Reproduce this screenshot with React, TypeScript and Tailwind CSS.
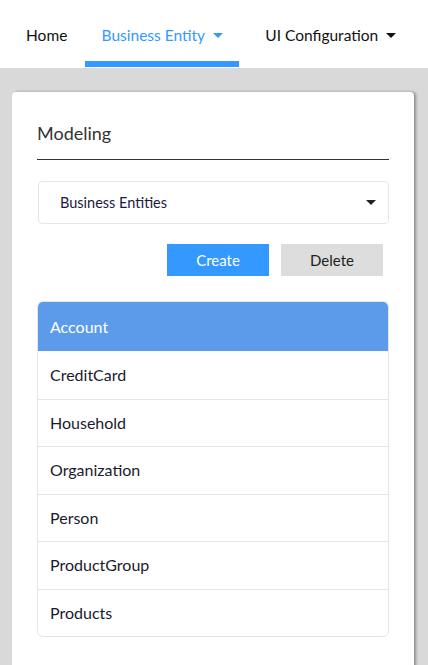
import React from "react";

const items = ["CreditCard", "Household", "Organization", "Person", "ProductGroup", "Products"];

function Caret({ className }: { className: string }) {
  return (
    <svg width="10" height="6" viewBox="0 0 10 6" className={className}>
      <path d="M0 0 L10 0 L5 5 Z" fill="currentColor" />
    </svg>
  );
}

export default function App() {
  return (
    <div className="w-[428px] h-[665px] overflow-hidden bg-[#d9d9d9] flex flex-col" style={{ fontFamily: "Lato, 'Noto Sans', sans-serif" }}>
      <nav className="h-[68px] bg-white flex items-stretch shrink-0 text-[15.5px] text-[#111]">
        <div className="pl-[26px] pr-[18px] flex items-center pt-[4px]">Home</div>
        <div className="w-[154px] flex items-center justify-center gap-[8px] pt-[10px] text-[#3399ff] border-b-[6px] border-[#3399ff] mb-px">
          <span>Business Entity</span>
          <Caret className="text-[#3399ff]" />
        </div>
        <div className="pl-[26px] flex items-center gap-[8px] pt-[4px]">
          <span>UI Configuration</span>
          <Caret className="text-[#111]" />
        </div>
      </nav>
      <div className="flex-1 pt-[24px] pl-[12px] pr-[14px]">
        <div className="bg-white rounded-[4px] shadow-[2px_0_3px_rgba(0,0,0,0.35)] h-[600px] px-[25px] pt-[28px]">
          <h2 className="text-[18px] text-[#333] leading-[26px]">Modeling</h2>
          <div className="mt-[13px] h-px bg-[#333]" />
          <div className="mt-[21px] ml-px h-[43px] border border-[#e6e6e6] rounded-[4px] flex items-center justify-between pl-[21px] pr-[12px] text-[14.5px] text-[#1a1a40]">
            <span>Business Entities</span>
            <Caret className="text-[#222]" />
          </div>
          <div className="mt-[20px] flex justify-end gap-[12px] pr-[6px]">
            <button className="w-[102px] h-[32px] bg-[#3399ff] text-white text-[15px]">Create</button>
            <button className="w-[102px] h-[32px] bg-[#dddddd] text-[#222] text-[15px]">Delete</button>
          </div>
          <div className="mt-[25px] border border-[#e3e6e8] rounded-[6px] overflow-hidden">
            <div className="h-[49px] bg-[#5c9bea] text-white flex items-center px-[12px] text-[16px]">Account</div>
            {items.map((it, i) => (
              <div key={it} className={`h-[47.5px] flex items-center px-[12px] text-[16px] text-[#1a1a2e] ${i > 0 ? "border-t border-[#e3e6e8]" : ""}`}>
                {it}
              </div>
            ))}
          </div>
        </div>
      </div>
    </div>
  );
}
